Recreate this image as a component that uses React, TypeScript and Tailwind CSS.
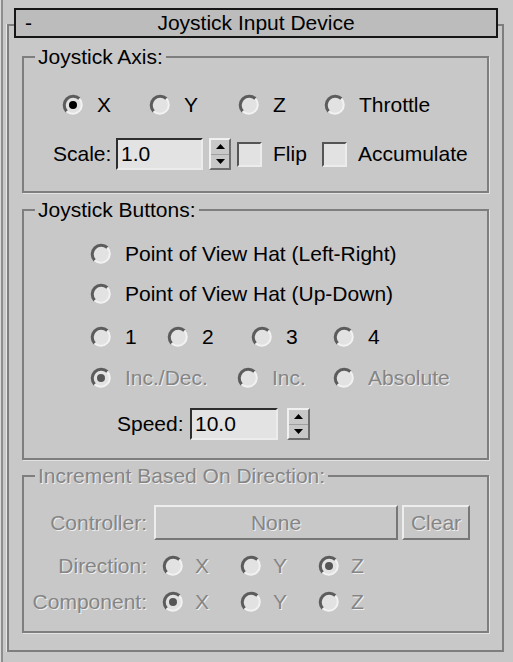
import React from 'react'

const dim = "text-[#858585] [text-shadow:1px_1px_0_#efefef]"

function RadioMark({ checked, disabled }: { checked?: boolean; disabled?: boolean }) {
  return (
    <svg width="22" height="22" viewBox="0 0 22 22" className="shrink-0">
      <circle cx="11" cy="11" r="9" fill="#e2e2e2" />
      <path d="M4.64 17.36A9 9 0 0 1 17.36 4.64" fill="none" stroke="#5c5c5c" strokeWidth="3" />
      <path d="M17.36 4.64A9 9 0 0 1 4.64 17.36" fill="none" stroke="#f2f2f2" strokeWidth="2" />
      {checked && <circle cx="11" cy="11" r="4" fill={disabled ? '#555555' : '#000000'} />}
    </svg>
  )
}

interface RadioProps {
  label: string
  checked?: boolean
  disabled?: boolean
  tight?: boolean
}

function Radio({ label, checked, disabled, tight }: RadioProps) {
  return (
    <div className={`flex items-center ${tight ? 'gap-[11px]' : 'gap-[13px]'}`}>
      <RadioMark checked={checked} disabled={disabled} />
      <span className={`whitespace-nowrap leading-[24px] ${disabled ? dim : 'text-black'}`}>{label}</span>
    </div>
  )
}

function Checkbox() {
  return (
    <div className="h-[25px] w-[25px] shrink-0 border-2 border-t-[#555555] border-l-[#555555] border-b-[#ececec] border-r-[#ececec] bg-[#e2e2e2]" />
  )
}

function NumField({ value, className = '' }: { value: string; className?: string }) {
  return (
    <div
      className={`flex h-[32px] items-center border-2 border-t-[#2e2e2e] border-l-[#2e2e2e] border-b-[#ececec] border-r-[#ececec] bg-[#e3e3e3] pl-[3px] leading-[24px] text-black ${className}`}
    >
      {value}
    </div>
  )
}

function Spinner({ className = '' }: { className?: string }) {
  return (
    <div
      className={`flex h-[32px] shrink-0 flex-col border-2 border-t-[#f0f0f0] border-l-[#f0f0f0] border-b-[#6e6e6e] border-r-[#6e6e6e] ${className}`}
    >
      <div className="flex flex-1 items-center justify-center border-b border-[#a0a0a0]">
        <svg width="9" height="5" viewBox="0 0 9 5">
          <path d="M4.5 0L9 5H0z" fill="#000" />
        </svg>
      </div>
      <div className="flex flex-1 items-center justify-center">
        <svg width="9" height="5" viewBox="0 0 9 5">
          <path d="M0 0H9L4.5 5z" fill="#000" />
        </svg>
      </div>
    </div>
  )
}

function FlatButton({ label, className = '' }: { label: string; className?: string }) {
  return (
    <div
      className={`flex h-[35px] items-center justify-center border-2 border-t-[#ededed] border-l-[#ededed] border-b-[#777777] border-r-[#777777] leading-[24px] ${dim} ${className}`}
    >
      {label}
    </div>
  )
}

interface GroupProps {
  label: string
  disabled?: boolean
  className?: string
  children: React.ReactNode
}

function Group({ label, disabled, className = '', children }: GroupProps) {
  return (
    <div className={`mx-[13px] border-2 border-[#7e7e7e] shadow-[1px_1px_0_#e2e2e2] ${className}`}>
      <div className={`-mt-[13px] ml-[11px] w-fit bg-[#c8c8c8] px-[3px] leading-[24px] ${disabled ? dim : 'text-black'}`}>
        {label}
      </div>
      {children}
    </div>
  )
}

export default function App() {
  return (
    <div className="flex h-[662px] w-[513px] overflow-hidden bg-[#c8c8c8] font-['Liberation_Sans',Arial,sans-serif] text-[21px] text-black">
      <div className="w-px bg-[#dadada]" />
      <div className="w-[2px] bg-[#8e8e8e]" />

      <div className="ml-[4px] mt-[24px] h-[628px] w-[497px] border-2 border-[#7e7e7e] pb-[17px] shadow-[-1px_0_0_#e6e6e6]">
        <div className="-mt-[18px] ml-[5px] grid h-[30px] w-[484px] grid-cols-[1fr_auto_1fr] items-center border-2 border-[#161616] bg-[#bcbcbc] leading-[24px]">
          <span className="pl-[9px]">-</span>
          <span>Joystick Input Device</span>
          <span />
        </div>

        <Group label="Joystick Axis:" className="mt-[18px] pb-[21px]">
          <div className="mt-[23px] flex h-[26px] items-center pl-[38px]">
            <div className="w-[87px]">
              <Radio checked label="X" />
            </div>
            <div className="w-[89px]">
              <Radio label="Y" />
            </div>
            <div className="w-[86px]">
              <Radio label="Z" />
            </div>
            <Radio label="Throttle" />
          </div>
          <div className="mt-[20px] flex h-[32px] items-center pl-[29px]">
            <span className="w-[63px] leading-[24px]">Scale:</span>
            <NumField value="1.0" className="w-[87px]" />
            <Spinner className="ml-[6px] w-[22px]" />
            <div className="ml-[6px]">
              <Checkbox />
            </div>
            <span className="ml-[11px] w-[49px] leading-[24px]">Flip</span>
            <Checkbox />
            <span className="ml-[11px] leading-[24px]">Accumulate</span>
          </div>
        </Group>

        <Group label="Joystick Buttons:" className="mt-[16px] pb-[18px]">
          <div className="mt-[19px] flex h-[26px] items-center pl-[66px]">
            <Radio label="Point of View Hat (Left-Right)" />
          </div>
          <div className="mt-[14px] flex h-[26px] items-center pl-[66px]">
            <Radio label="Point of View Hat (Up-Down)" />
          </div>
          <div className="mt-[17px] flex h-[26px] items-center pl-[66px]">
            <div className="w-[77px]">
              <Radio label="1" />
            </div>
            <div className="w-[84px]">
              <Radio label="2" />
            </div>
            <div className="w-[82px]">
              <Radio label="3" />
            </div>
            <Radio label="4" />
          </div>
          <div className="mt-[15px] flex h-[26px] items-center pl-[66px]">
            <div className="w-[147px]">
              <Radio checked disabled label="Inc./Dec." />
            </div>
            <div className="w-[96px]">
              <Radio disabled label="Inc." />
            </div>
            <Radio disabled label="Absolute" />
          </div>
          <div className="mt-[17px] flex h-[32px] items-center pl-[93px]">
            <span className="w-[73px] leading-[24px]">Speed:</span>
            <NumField value="10.0" className="w-[88px]" />
            <Spinner className="ml-[9px] w-[23px]" />
          </div>
        </Group>

        <Group label="Increment Based On Direction:" disabled className="mt-[15px] pb-[16px]">
          <div className="mt-[17px] flex h-[35px] items-center">
            <span className={`w-[123px] text-right leading-[24px] ${dim}`}>Controller:</span>
            <FlatButton label="None" className="ml-[7px] w-[244px]" />
            <FlatButton label="Clear" className="ml-[4px] w-[68px]" />
          </div>
          <div className="mt-[13px] flex h-[26px] items-center">
            <span className={`w-[123px] text-right leading-[24px] ${dim}`}>Direction:</span>
            <div className="ml-[15px] w-[78px]">
              <Radio tight disabled label="X" />
            </div>
            <div className="w-[78px]">
              <Radio tight disabled label="Y" />
            </div>
            <Radio tight checked disabled label="Z" />
          </div>
          <div className="mt-[10px] flex h-[26px] items-center">
            <span className={`w-[123px] text-right leading-[24px] ${dim}`}>Component:</span>
            <div className="ml-[15px] w-[78px]">
              <Radio tight checked disabled label="X" />
            </div>
            <div className="w-[78px]">
              <Radio tight disabled label="Y" />
            </div>
            <Radio tight disabled label="Z" />
          </div>
        </Group>
      </div>
    </div>
  )
}
